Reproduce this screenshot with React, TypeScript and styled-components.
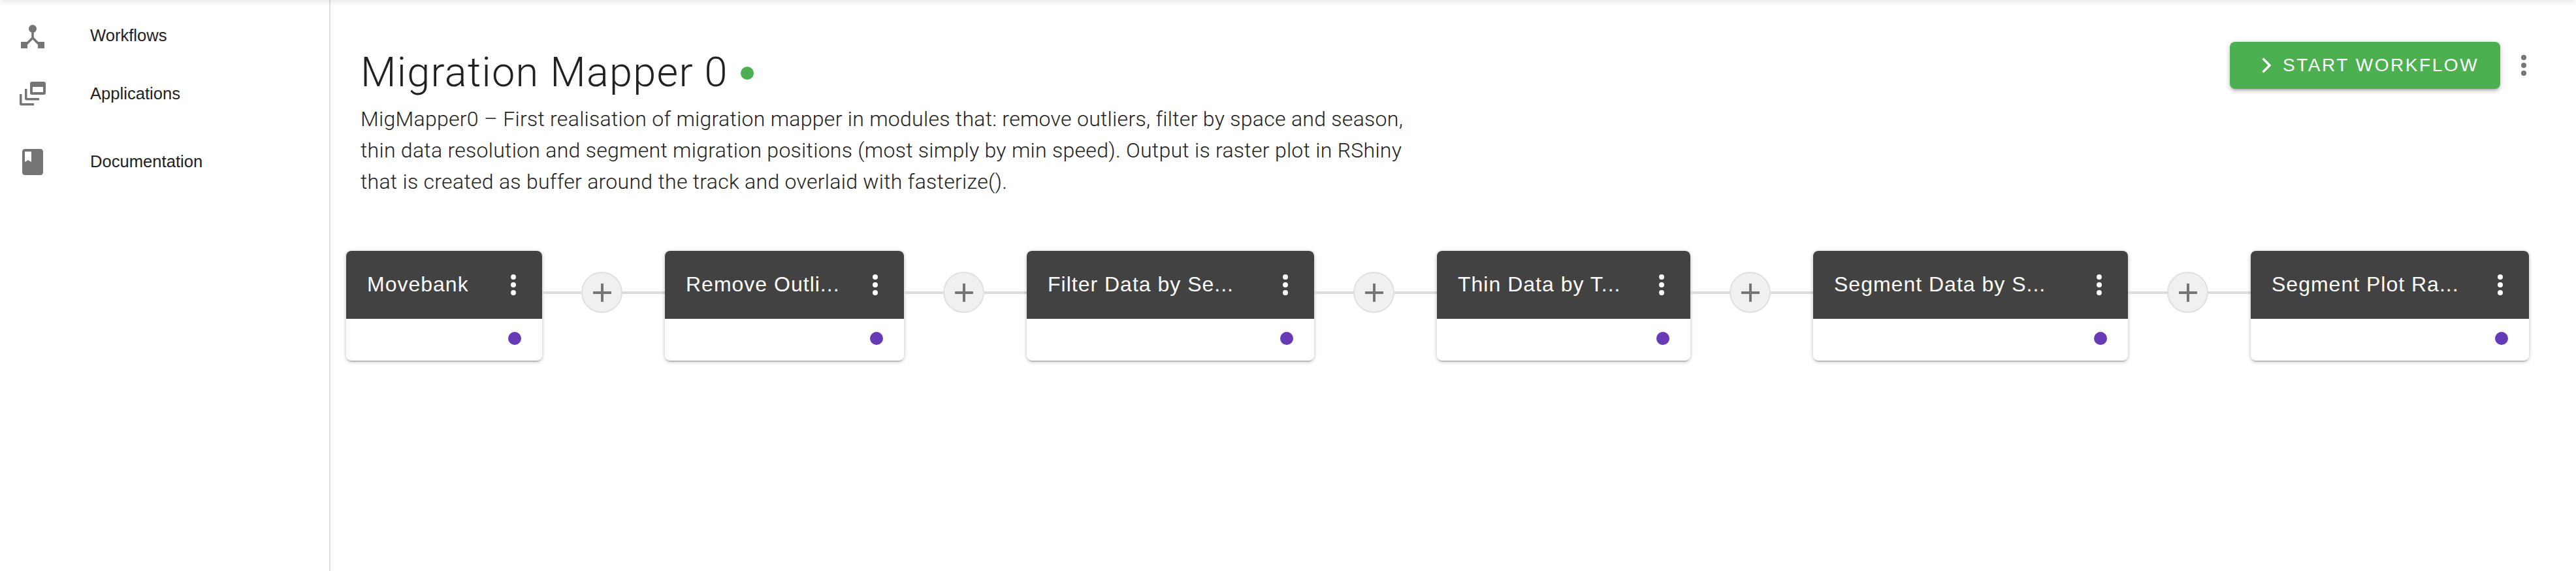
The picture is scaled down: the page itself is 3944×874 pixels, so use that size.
import React from "react";
import styled, { createGlobalStyle } from "styled-components";

const Global = createGlobalStyle`
  html, body { margin: 0; padding: 0; background: #fff; }
  body { font-family: "Liberation Sans", Arial, sans-serif; color: #212121; overflow: hidden; }
`;

const Page = styled.div`
  display: flex;
  position: relative;
  width: 3944px;
  height: 874px;
  overflow: hidden;
`;

const TopShadow = styled.div`
  position: absolute;
  top: -4px;
  left: 0;
  right: 0;
  height: 4px;
  box-shadow: 0 1px 10px rgba(0, 0, 0, 0.22);
`;

const Sidebar = styled.nav`
  flex: 0 0 504px;
  box-sizing: content-box;
  border-right: 2px solid #e0e0e0;
  padding-top: 10px;
`;

const NavGroup = styled.div`
  display: flex;
  flex-direction: column;
  margin-bottom: 15px;
`;

const NavRow = styled.a`
  display: flex;
  align-items: center;
  height: 89px;
  padding-left: 26px;
`;

const NavIcon = styled.svg`
  width: 48px;
  height: 48px;
  flex: none;
  fill: #757575;
  margin-right: 64px;
`;

const NavLabel = styled.span`
  font-size: 25.6px;
  color: #212121;
`;

const Main = styled.main`
  flex: 1;
  min-width: 0;
  padding: 0 24px;
`;

const Header = styled.header`
  display: flex;
  justify-content: space-between;
  align-items: flex-start;
  height: 384px;
  box-sizing: border-box;
  padding: 64px 0 0 22px;
`;

const Intro = styled.div`
  padding-top: 8px;
`;

const TitleRow = styled.div`
  display: flex;
  align-items: center;
  gap: 19px;
  height: 76px;
`;

const Title = styled.h1`
  margin: 0;
  font-family: Roboto, "Liberation Sans", sans-serif;
  font-weight: 300;
  font-size: 63px;
  letter-spacing: 1.3px;
  color: #212121;
`;

const StatusDot = styled.span`
  width: 20px;
  height: 20px;
  margin-top: 4px;
  border-radius: 50%;
  background: #4caf50;
`;

const Description = styled.p`
  margin: 10px 0 0;
  width: 1610px;
  font-family: Roboto, "Liberation Sans", sans-serif;
  font-weight: 300;
  font-size: 32px;
  letter-spacing: 0.28px;
  line-height: 48px;
  color: #212121;
`;

const Actions = styled.div`
  display: flex;
  align-items: center;
  gap: 32px;
  padding-right: 52px;
`;

const StartButton = styled.button`
  display: flex;
  align-items: center;
  width: 414px;
  height: 72px;
  padding: 0 0 0 49px;
  gap: 18px;
  border: 0;
  border-radius: 8px;
  background: #4caf50;
  color: #fff;
  font-family: "Liberation Sans", Arial, sans-serif;
  font-size: 28px;
  letter-spacing: 2.55px;
  box-shadow: 0 3px 3px -2px rgba(0, 0, 0, 0.2), 0 4px 6px 0 rgba(0, 0, 0, 0.14), 0 1px 10px 0 rgba(0, 0, 0, 0.12);
`;

const Chevron = styled.svg`
  width: 14px;
  height: 24px;
  fill: none;
  stroke: #fff;
  stroke-width: 3.4;
`;

const Kebab = styled.span<{ $color: string }>`
  display: flex;
  flex-direction: column;
  gap: 4px;
  flex: none;
  span {
    width: 8px;
    height: 8px;
    border-radius: 50%;
    background: ${(p) => p.$color};
  }
`;

const Pipeline = styled.div`
  display: flex;
  align-items: flex-start;
`;

const Card = styled.article<{ $width: number }>`
  flex: none;
  width: ${(p) => p.$width}px;
  height: 168px;
  border-radius: 8px;
  overflow: hidden;
  background: #fff;
  box-shadow: 0 3px 2px -2px rgba(0, 0, 0, 0.3), 0 2px 6px 0 rgba(0, 0, 0, 0.14), 0 1px 6px 0 rgba(0, 0, 0, 0.12);
`;

const CardHeader = styled.div`
  display: flex;
  align-items: center;
  justify-content: space-between;
  height: 104px;
  padding: 0 40px 0 32px;
  background: #424242;
`;

const CardTitle = styled.span`
  margin-bottom: 2px;
  color: #fff;
  font-size: 32px;
  letter-spacing: 1px;
  white-space: nowrap;
`;

const CardFooter = styled.div`
  display: flex;
  justify-content: flex-end;
  align-items: center;
  height: 60px;
  padding: 0 32px 4px 0;
`;

const Port = styled.span`
  width: 20px;
  height: 20px;
  border-radius: 50%;
  background: #673ab7;
`;

const Connector = styled.div`
  display: flex;
  align-items: center;
  flex: none;
  margin-top: 32px;
`;

const Wire = styled.span<{ $width: number }>`
  width: ${(p) => p.$width}px;
  height: 4px;
  background: #dcdcdc;
`;

const AddButton = styled.button`
  display: flex;
  align-items: center;
  justify-content: center;
  width: 63px;
  height: 63px;
  padding: 0;
  border: 2px solid #e0e0e0;
  border-radius: 50%;
  background: #f0f0f0;
`;

const PlusGlyph = styled.svg`
  width: 28px;
  height: 28px;
  fill: #757575;
`;

const steps = [
  { title: "Movebank", width: 300 },
  { title: "Remove Outli...", width: 366 },
  { title: "Filter Data by Se...", width: 440 },
  { title: "Thin Data by T...", width: 388 },
  { title: "Segment Data by S...", width: 482 },
  { title: "Segment Plot Ra...", width: 426 },
];

const Dots = ({ color }: { color: string }) => (
  <Kebab $color={color}>
    <span />
    <span />
    <span />
  </Kebab>
);

export default function App() {
  return (
    <Page>
      <Global />
      <TopShadow />
      <Sidebar>
        <NavGroup>
          <NavRow>
            <NavIcon viewBox="0 0 48 48">
              <circle cx="24" cy="13" r="6" />
              <rect x="6" y="33" width="10" height="10" />
              <rect x="32" y="33" width="10" height="10" />
              <path d="M22.2 13h3.6v13.3L37 37.5 34.5 40 24 29.5 13.500 40 11 37.500l11.200-11.200z" />
            </NavIcon>
            <NavLabel>Workflows</NavLabel>
          </NavRow>
          <NavRow>
            <NavIcon viewBox="0 0 48 48">
              <path
                fillRule="evenodd"
                d="M23 5h18a3 3 0 0 1 3 3v14a3 3 0 0 1-3 3H23a3 3 0 0 1-3-3V8a3 3 0 0 1 3-3zm1 8v8h16v-8z"
              />
              <path d="M12 16h3.500v14h18.500v3.500H15a3 3 0 0 1-3-3z" />
              <path d="M4 24h3.500v14h18.500v3.500H7a3 3 0 0 1-3-3z" />
            </NavIcon>
            <NavLabel>Applications</NavLabel>
          </NavRow>
        </NavGroup>
        <NavGroup>
          <NavRow>
            <NavIcon viewBox="0 0 24 24">
              <path d="M18 2H6c-1.100 0-2 .9-2 2v16c0 1.100.9 2 2 2h12c1.100 0 2-.9 2-2V4c0-1.100-.9-2-2-2zM6 4h5v8l-2.500-1.500L6 12V4z" />
            </NavIcon>
            <NavLabel>Documentation</NavLabel>
          </NavRow>
        </NavGroup>
      </Sidebar>
      <Main>
        <Header>
          <Intro>
            <TitleRow>
              <Title>Migration Mapper 0</Title>
              <StatusDot />
            </TitleRow>
            <Description>
              MigMapper0 – First realisation of migration mapper in modules that: remove outliers, filter by space and
              season, thin data resolution and segment migration positions (most simply by min speed). Output is raster
              plot in RShiny that is created as buffer around the track and overlaid with fasterize().
            </Description>
          </Intro>
          <Actions>
            <StartButton>
              <Chevron viewBox="0 0 14 24">
                <path d="M1.500 1.500 12 12 1.500 22.500" />
              </Chevron>
              START WORKFLOW
            </StartButton>
            <Dots color="#757575" />
          </Actions>
        </Header>
        <Pipeline>
          {steps.map((s, i) => (
            <React.Fragment key={s.title}>
              <Card $width={s.width}>
                <CardHeader>
                  <CardTitle>{s.title}</CardTitle>
                  <Dots color="#fff" />
                </CardHeader>
                <CardFooter>
                  <Port />
                </CardFooter>
              </Card>
              {i < steps.length - 1 && (
                <Connector>
                  <Wire $width={60} />
                  <AddButton>
                    <PlusGlyph viewBox="0 0 28 28">
                      <path d="M12 0h4v12h12v4H16v12h-4V16H0v-4h12z" />
                    </PlusGlyph>
                  </AddButton>
                  <Wire $width={65} />
                </Connector>
              )}
            </React.Fragment>
          ))}
        </Pipeline>
      </Main>
    </Page>
  );
}
